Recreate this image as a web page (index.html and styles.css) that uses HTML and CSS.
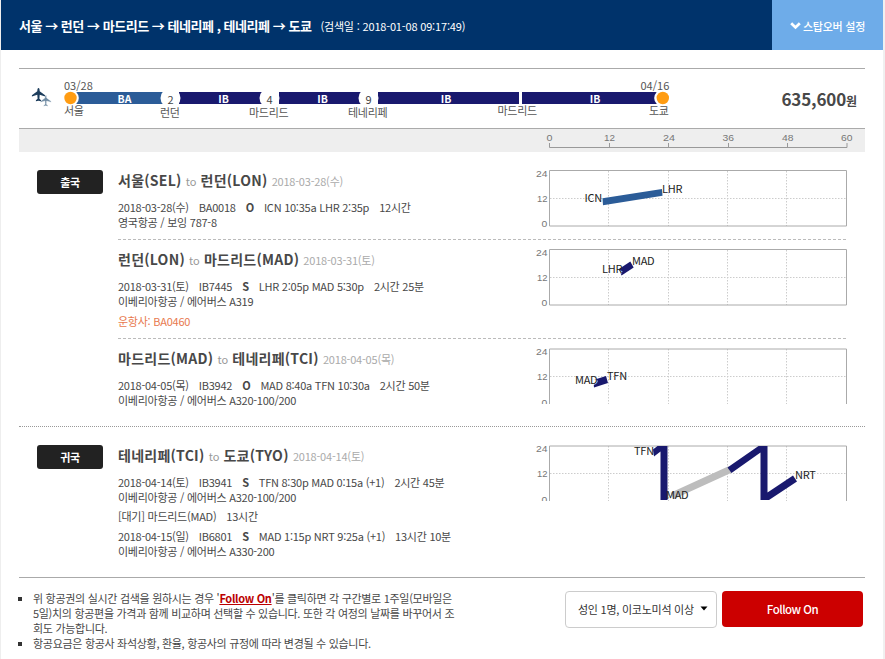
FILE: index.html
```html
<!DOCTYPE html>
<html lang="ko">
<head>
<meta charset="utf-8">
<title>항공 여정</title>
<link rel="stylesheet" href="styles.css">
</head>
<body>
<div class="page">
<header class="top">
  <h1 class="route">서울 → 런던 → 마드리드 → 테네리페 , 테네리페 → 도쿄</h1>
  <span class="searched">(검색일 : 2018-01-08 09:17:49)</span>
  <a class="stopover"><svg width="11" height="8" viewBox="0 0 11 8"><path d="M1.2 1.3 5.5 5.4 9.8 1.3" fill="none" stroke="#fff" stroke-width="2.8"/></svg><span>스탑오버 설정</span></a>
</header>
<main class="content">
  <section class="summary">
    <svg class="line" width="660" height="59" viewBox="19 69 660 59">
      <path d="M38.500 88c.9 0 1.200 1.500 1.200 3.300l5.400 3.900v1.300l-5.400-1.700-.3 4 1.700 1.500v1l-2.600-.6-2.600.6v-1l1.700-1.500-.3-4-5.400 1.700v-1.300l5.400-3.900c0-1.800.3-3.300 1.200-3.300z" fill="#1d3d5c"/>
      <path d="M45.800 95.300c.7 0 .9 1.300.9 2.600l4.400 3.400v1l-4.400-1.300-.2 3.300 1.400 1.200v.8l-2.100-.5-2.100.5v-.8l1.400-1.200-.2-3.300-4.400 1.300v-1l4.400-3.400c0-1.300.2-2.600.9-2.600z" fill="#6f8ba3" stroke="#fff" stroke-width=".4"/>
      <path d="M71 92H163v12H71z" fill="#2b5c98"/>
      <path d="M179 92h83v12h-83zM279 92h83v12h-83zM378 92h141v12H378zM522 92h141v12H522z" fill="#19196e"/>
      <g fill="#fff"><circle cx="70.500" cy="98" r="8.300"/><circle cx="170.500" cy="98" r="10"/><circle cx="269.500" cy="98" r="10"/><circle cx="368.500" cy="98" r="10"/><circle cx="662.500" cy="98" r="8.300"/></g>
      <circle cx="70.500" cy="98" r="6.200" fill="#ff9c12"/><circle cx="662.800" cy="98" r="6.200" fill="#ff9c12"/>
      <g class="carrier"><text x="124.500" y="102.800">BA</text><text x="223.500" y="102.800">IB</text><text x="322.500" y="102.800">IB</text><text x="446" y="102.800">IB</text><text x="595" y="102.800">IB</text></g>
      <g class="stay"><text x="170.500" y="103.500">2</text><text x="269.500" y="103.500">4</text><text x="368.500" y="103.500">9</text></g>
      <g class="day"><text x="64" y="89.800" textLength="28.500">03/28</text><text x="640.500" y="89.800" textLength="28.500">04/16</text></g>
      <g class="city"><text x="64" y="115">서울</text><text x="160" y="117">런던</text><text x="249" y="117">마드리드</text><text x="348" y="117">테네리페</text><text x="497.500" y="115">마드리드</text><text x="649" y="115">도쿄</text></g>
    </svg>
    <strong class="price">635,600<small>원</small></strong>
  </section>
  <div class="scale">
    <svg width="320" height="23" viewBox="540 129 320 23">
      <path d="M549.500 143v4.500h297.500V143M609.500 143v4M668.500 143v4M728.500 143v4M787.500 143v4" fill="none" stroke="#999"/>
      <g class="tick"><text x="546.500" y="141" textLength="6" lengthAdjust="spacingAndGlyphs">0</text><text x="604" y="141" textLength="11" lengthAdjust="spacingAndGlyphs">12</text><text x="663" y="141" textLength="12" lengthAdjust="spacingAndGlyphs">24</text><text x="722.500" y="141" textLength="11.500" lengthAdjust="spacingAndGlyphs">36</text><text x="782" y="141" textLength="11.500" lengthAdjust="spacingAndGlyphs">48</text><text x="841" y="141" textLength="11.500" lengthAdjust="spacingAndGlyphs">60</text></g>
    </svg>
  </div>

  <section class="bound out">
    <div class="tag">출국</div>
    <div class="segments">
      <article class="seg first">
        <div class="info">
          <h2>서울(SEL) <i>to</i> 런던(LON) <em>2018-03-28(수)</em></h2>
          <p class="leg"><span>2018-03-28(수)</span><span>BA0018</span><b>O</b><span>ICN 10:35a LHR 2:35p</span><span>12시간</span></p>
          <p>영국항공 / 보잉 787-8</p>
        </div>
        <svg class="chart" width="330" height="67" viewBox="530 160 330 67">
          <path class="grid" d="M608.500 171v55M668.500 171v55M727.500 171v55M786.500 171v55M550 198.500h296"/>
          <path class="frame" d="M549.500 170.500h297v55.500h-297z"/>
          <g class="tick"><text x="536" y="177" textLength="11.500" lengthAdjust="spacingAndGlyphs">24</text><text x="537" y="202" textLength="10.500" lengthAdjust="spacingAndGlyphs">12</text><text x="541.500" y="227" textLength="5.800" lengthAdjust="spacingAndGlyphs">0</text></g>
          <path d="M602.500 198.300 662 189l.5 6.700-59.500 9.600z" fill="#2b5c98"/>
          <g class="port"><text x="584.500" y="202">ICN</text><text x="662" y="193">LHR</text></g>
        </svg>
      </article>
      <article class="seg second">
        <div class="info">
          <h2>런던(LON) <i>to</i> 마드리드(MAD) <em>2018-03-31(토)</em></h2>
          <p class="leg"><span>2018-03-31(토)</span><span>IB7445</span><b>S</b><span>LHR 2:05p MAD 5:30p</span><span>2시간 25분</span></p>
          <p>이베리아항공 / 에어버스 A319</p>
          <p class="operator">운항사: BA0460</p>
        </div>
        <svg class="chart" width="330" height="67" viewBox="530 239 330 67">
          <path class="grid" d="M608.500 250v55M668.500 250v55M727.500 250v55M786.500 250v55M550 277.500h296"/>
          <path class="frame" d="M549.500 249.500h297v55.500h-297z"/>
          <g class="tick"><text x="536" y="256" textLength="11.500" lengthAdjust="spacingAndGlyphs">24</text><text x="537" y="281" textLength="10.500" lengthAdjust="spacingAndGlyphs">12</text><text x="541.500" y="306" textLength="5.800" lengthAdjust="spacingAndGlyphs">0</text></g>
          <path d="M619 269 630.300 261.500l3.400 6-12.200 8z" fill="#19196e"/>
          <path d="M620 270l2.500 1.500-1.500 2.500z" fill="#fff"/>
          <g class="port"><text x="602" y="273">LHR</text><text x="632" y="265">MAD</text></g>
        </svg>
      </article>
      <article class="seg third">
        <div class="info">
          <h2>마드리드(MAD) <i>to</i> 테네리페(TCI) <em>2018-04-05(목)</em></h2>
          <p class="leg"><span>2018-04-05(목)</span><span>IB3942</span><b>O</b><span>MAD 8:40a TFN 10:30a</span><span>2시간 50분</span></p>
          <p>이베리아항공 / 에어버스 A320-100/200</p>
        </div>
        <svg class="chart" width="330" height="66" viewBox="530 338 330 66">
          <path class="grid" d="M608.500 349v55M668.500 349v55M727.500 349v55M786.500 349v55M550 376.500h296"/>
          <path class="frame" d="M549.500 410v-61h297v61"/>
          <g class="tick"><text x="536" y="355" textLength="11.500" lengthAdjust="spacingAndGlyphs">24</text><text x="537" y="380" textLength="10.500" lengthAdjust="spacingAndGlyphs">12</text><text x="541.500" y="405.500" textLength="5.800" lengthAdjust="spacingAndGlyphs">0</text></g>
          <path d="M593.500 380 606 376l2 7-14 4.500z" fill="#19196e"/>
          <path d="M593 379.500q5-1 4.500 2.500-1 2.500-4.500 3z" fill="#fff"/>
          <g class="port"><text x="575" y="384">MAD</text><text x="607" y="380">TFN</text></g>
        </svg>
      </article>
    </div>
  </section>

  <section class="bound back">
    <div class="tag">귀국</div>
    <div class="segments">
      <article class="seg fourth">
        <div class="info">
          <h2>테네리페(TCI) <i>to</i> 도쿄(TYO) <em>2018-04-14(토)</em></h2>
          <p class="leg"><span>2018-04-14(토)</span><span>IB3941</span><b>S</b><span>TFN 8:30p MAD 0:15a (+1)</span><span>2시간 45분</span></p>
          <p>이베리아항공 / 에어버스 A320-100/200</p>
          <p class="wait"><span>[대기] 마드리드(MAD)</span><span>13시간</span></p>
          <p class="leg"><span>2018-04-15(일)</span><span>IB6801</span><b>S</b><span>MAD 1:15p NRT 9:25a (+1)</span><span>13시간 10분</span></p>
          <p>이베리아항공 / 에어버스 A330-200</p>
        </div>
        <svg class="chart" width="330" height="66" viewBox="530 435 330 66">
          <path class="grid" d="M608.500 446v55M668.500 446v55M727.500 446v55M786.500 446v55M550 473.500h296"/>
          <path class="frame" d="M549.500 510v-64h297v64"/>
          <g class="tick"><text x="536" y="452" textLength="11.500" lengthAdjust="spacingAndGlyphs">24</text><text x="537" y="477" textLength="10.500" lengthAdjust="spacingAndGlyphs">12</text><text x="541.500" y="502.500" textLength="5.800" lengthAdjust="spacingAndGlyphs">0</text></g>
          <path d="M672 496 730 469.500" stroke="#bdbdbd" stroke-width="7" fill="none"/>
          <path d="M653 449.500 657.500 446H667.500V500H660.500V451.500L654 456.500zM727.500 467.500 758.500 446H767.500V492.500L793 475.500 797 481.500 769 500H760.500V452.500L731.500 473z" fill="#19196e"/>
          <g class="port"><text x="634" y="455">TFN</text><text x="666" y="499">MAD</text><text x="795" y="479">NRT</text></g>
        </svg>
      </article>
    </div>
  </section>

  <footer class="bottom">
    <ul class="notes">
      <li>위 항공권의 실시간 검색을 원하시는 경우 '<a>Follow On</a>'를 클릭하면 각 구간별로 1주일(모바일은<br>5일)치의 항공편을 가격과 함께 비교하며 선택할 수 있습니다. 또한 각 여정의 날짜를 바꾸어서 조<br>회도 가능합니다.</li>
      <li>항공요금은 항공사 좌석상황, 환율, 항공사의 규정에 따라 변경될 수 있습니다.</li>
    </ul>
    <div class="select"><span>성인 1명, 이코노미석 이상</span><svg width="8" height="8" viewBox="0 0 8 8"><path d="M.5.500h7L4 4.500z"/></svg></div>
    <button class="follow">Follow On</button>
  </footer>
</main>
</div>
</body>
</html>
```
FILE: styles.css
```css
* { box-sizing: border-box; }
body {
  margin: 0;
  background: #fff;
  color: #484848;
  font-family: "Noto Sans CJK KR", "Noto Sans", sans-serif;
  font-size: 11px;
  line-height: 15px;
  letter-spacing: -.25px;
}
h1, h2, p, ul { margin: 0; padding: 0; }
svg { display: block; flex: none; }
.page {
  height: 659px;
  overflow: hidden;
  border-left: 1px solid #eee;
  border-right: 2px solid #f0f0f0;
}
.top {
  display: flex;
  align-items: center;
  height: 50px;
  padding-left: 18px;
  background: #00336b;
  color: #fff;
  white-space: nowrap;
}
.route { font-size: 13px; font-weight: 700; letter-spacing: -.47px; }
.searched { margin-left: 9px; padding-top: 2px; letter-spacing: -.17px; }
.stopover {
  display: flex;
  align-items: center;
  gap: 2px;
  width: 111px;
  height: 50px;
  margin-left: auto;
  padding: 2px 0 0 18px;
  background: #6eace9;
  font-weight: 500;
}
.content { margin: 18px 18px 0 18px; }
.summary {
  display: flex;
  justify-content: space-between;
  height: 61px;
  border-top: 1px solid #aaa;
  border-bottom: 1px solid #aaa;
}
.carrier { fill: #fff; font-size: 10.5px; font-weight: 700; text-anchor: middle; letter-spacing: 0; }
.stay { fill: #444; font-size: 11px; text-anchor: middle; letter-spacing: 0; }
.day { fill: #555; font-size: 11px; }
.city { fill: #555; font-size: 11px; }
.price {
  padding: 20px 8px 0 0;
  font-size: 17px;
  font-weight: 700;
  line-height: 20px;
  letter-spacing: -.15px;
  white-space: nowrap;
}
.price small { font-size: 12px; }
.scale { display: flex; justify-content: flex-end; height: 23px; padding-right: 5px; background: #eee; }
.tick { fill: #777; font-family: "Liberation Sans", sans-serif; font-size: 9.5px; letter-spacing: 0; }
.bound { display: grid; grid-template-columns: 99px 728px; }
.out { height: 275px; padding-top: 8px; border-bottom: 1px dotted #999; }
.back { height: 151px; padding-top: 8px; border-bottom: 1px solid #aaa; }
.tag {
  width: 66px;
  height: 24px;
  margin: 10px 0 0 18px;
  border-radius: 3px;
  background: #222;
  color: #fff;
  font-weight: 700;
  line-height: 25px;
  text-align: center;
}
.seg { display: grid; grid-template-columns: 412px 316px; }
.first { height: 80px; border-bottom: 1px dashed #bbb; }
.second { height: 99px; border-bottom: 1px dashed #bbb; }
.second .info, .third .info, .second .chart, .third .chart { margin-top: -1px; }
.info { padding-top: 10px; white-space: nowrap; }
h2 { height: 30px; font-size: 14px; font-weight: 700; line-height: 20px; letter-spacing: .25px; }
h2 i { color: #999; font-size: 11px; font-weight: 400; font-style: normal; letter-spacing: 0; }
h2 em { color: #aaa; font-size: 11px; font-weight: 400; font-style: normal; letter-spacing: -.2px; }
.leg, .wait { display: flex; gap: 10px; }
.operator { margin-top: 5px; color: #e8794e; }
.wait { margin: 4px 0 5px; }
.frame { fill: none; stroke: #aaa; }
.grid { fill: none; stroke: #ccc; stroke-dasharray: 1.500 1.500; }
.port { fill: #222; font-size: 11px; }
.bottom { display: flex; align-items: flex-start; }
.notes { width: 546px; padding: 13px 0 0 14px; list-style: none; white-space: nowrap; letter-spacing: -.3px; }
.notes li::before { content: ""; float: left; width: 4px; height: 4px; margin: 6px 0 0 -15px; background: #333; }
.notes a { color: #b00; font-weight: 700; text-decoration: underline; }
.select {
  display: flex;
  align-items: center;
  justify-content: space-between;
  width: 152px;
  height: 37px;
  margin: 13px 5px 0 0;
  padding: 0 8px 0 12px;
  border: 1px solid #ccc;
  border-radius: 4px;
  color: #333;
  white-space: nowrap;
}
.follow {
  width: 141px;
  height: 36px;
  margin: 13px 0 0;
  padding: 0;
  border: 0;
  border-radius: 4px;
  background: #c00;
  color: #fff;
  font: 500 11.5px "Noto Sans CJK KR", sans-serif;
  letter-spacing: -.5px;
}
```
